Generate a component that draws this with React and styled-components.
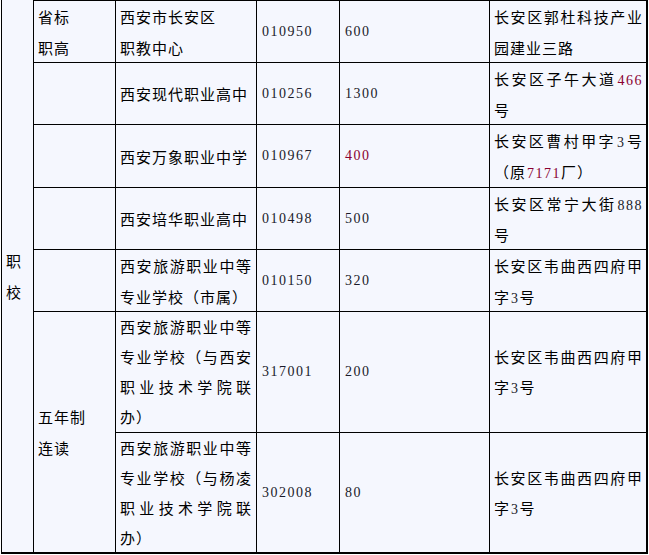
import React from 'react';
import styled, { createGlobalStyle } from 'styled-components';

const GlobalStyle = createGlobalStyle`
  html, body {
    margin: 0;
    padding: 0;
    background: #ffffff;
  }
  body {
    font-family: 'Noto Sans CJK SC', 'Liberation Sans', sans-serif;
    color: #000;
  }
`;

// 表格数据
const rows = [
  { name: '西安市长安区\n职教中心', code: '010950', plan: '600', addr: [['长安区郭杜科技产业园建业三路']] },
  { name: '西安现代职业高中', code: '010256', plan: '1300', addr: [['长安区子午大道'], ['466', true], ['号']] },
  { name: '西安万象职业中学', code: '010967', plan: '400', planRed: true, addr: [['长安区曹村甲字'], ['3'], ['号（原'], ['7171', true], ['厂）']] },
  { name: '西安培华职业高中', code: '010498', plan: '500', addr: [['长安区常宁大街'], ['888'], ['号']] },
  { name: '西安旅游职业中等专业学校（市属）', code: '010150', plan: '320', addr: [['长安区韦曲西四府甲字'], ['3'], ['号']] },
  { name: '西安旅游职业中等专业学校（与西安职业技术学院联办）', code: '317001', plan: '200', addr: [['长安区韦曲西四府甲字'], ['3'], ['号']] },
  { name: '西安旅游职业中等专业学校（与杨凌职业技术学院联办）', code: '302008', plan: '80', addr: [['长安区韦曲西四府甲字'], ['3'], ['号']] },
];

const App = () => {
  return (
    <>
      <GlobalStyle />
      <Page>
        <Table>
          <Cell $rows={7} $noTop>
            <Text $tall>职<br />校</Text>
          </Cell>
          {rows.map((row, i) => {
            const tall = i < 5;
            return (
              <React.Fragment key={row.code}>
                {i === 0 && (
                  <Cell>
                    <Text $tall>省标<br />职高</Text>
                  </Cell>
                )}
                {i > 0 && i < 5 && <Cell />}
                {i === 5 && (
                  <Cell $rows={2}>
                    <Text $tall>五年制<br />连读</Text>
                  </Cell>
                )}
                <Cell>
                  <Text $justify $tall={tall}>{row.name}</Text>
                </Cell>
                <Cell>
                  <Num>{row.code}</Num>
                </Cell>
                <Cell>
                  <Num $red={row.planRed}>{row.plan}</Num>
                </Cell>
                <Cell $wide>
                  <Text $justify $tall={tall}>
                    {row.addr.map(([part, red], j) =>
                      /^\d+$/.test(part)
                        ? <Num key={j} $red={red}>{part}</Num>
                        : <React.Fragment key={j}>{part}</React.Fragment>
                    )}
                  </Text>
                </Cell>
              </React.Fragment>
            );
          })}
        </Table>
      </Page>
    </>
  );
};

export default App;

/// 스타일
const Page = styled.div`
  padding-left: 1px;
  width: 648px;
`;

const Table = styled.div`
  display: grid;
  grid-template-columns: 32px 82px 141px 83px 150px 157px;
  grid-template-rows: 62px 62px 63px 62px 62px 121px 120px;
  width: 645px;
  background-color: #f5f7fe;
  border-right: 2px solid #000;
  border-bottom: 2px solid #000;
`;

const Cell = styled.div`
  grid-row: ${({ $rows }) => ($rows ? `span ${$rows}` : 'auto')};
  display: flex;
  align-items: center;
  box-sizing: border-box;
  border-left: 1px solid #000;
  border-top: ${({ $noTop }) => ($noTop ? 'none' : '1px solid #000')};
  padding: 0 ${({ $wide }) => ($wide ? '3px' : '4px')} 0 4px;
  min-width: 0;
`;

const Text = styled.div`
  width: 100%;
  font-size: 15px;
  line-height: ${({ $tall }) => ($tall ? '31px' : '30px')};
  letter-spacing: 1px;
  white-space: pre-line;
  text-align: ${({ $justify }) => ($justify ? 'justify' : 'left')};
  text-justify: inter-character;
  word-break: break-all;
`;

const Num = styled.span`
  font-family: 'Liberation Serif', 'Times New Roman', serif;
  font-size: 14px;
  line-height: 1;
  letter-spacing: 1.5px;
  color: ${({ $red }) => ($red ? '#8a0030' : '#1a1a2a')};
  padding-left: 1px;
`;
